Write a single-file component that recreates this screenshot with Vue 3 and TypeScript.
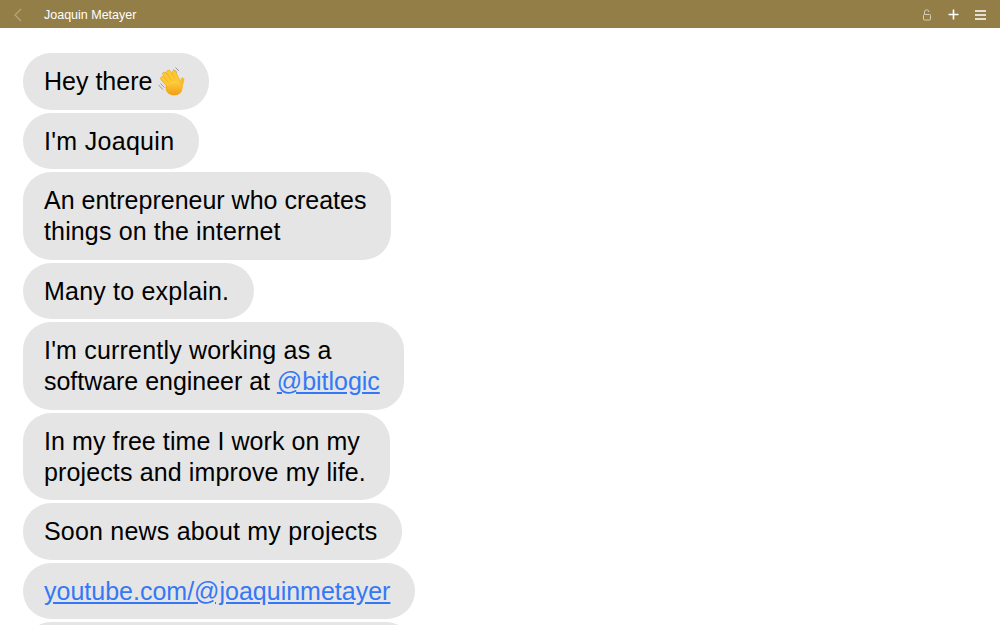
<script setup lang="ts">
interface Part { text: string; href?: boolean }
interface Line { parts: Part[]; track?: number }
interface Msg { lines: Line[]; wave?: boolean; cut?: boolean }
const messages: Msg[] = [
  { lines: [{ parts: [{ text: 'Hey there' }] }], wave: true },
  { lines: [{ parts: [{ text: "I'm Joaquin" }], track: 0.3 }] },
  { lines: [{ parts: [{ text: 'An entrepreneur who creates' }] }, { parts: [{ text: 'things on the internet' }], track: 0.14 }] },
  { lines: [{ parts: [{ text: 'Many to explain.' }], track: 0.2 }] },
  { lines: [{ parts: [{ text: "I'm currently working as a" }], track: 0.19 }, { parts: [{ text: 'software engineer at ' }, { text: '@bitlogic', href: true }], track: -0.03 }] },
  { lines: [{ parts: [{ text: 'In my free time I work on my' }], track: 0.07 }, { parts: [{ text: 'projects and improve my life.' }], track: 0.13 }] },
  { lines: [{ parts: [{ text: 'Soon news about my projects' }], track: 0.2 }] },
  { lines: [{ parts: [{ text: 'youtube.com/@joaquinmetayer', href: true }] }] },
  { lines: [{ parts: [{ text: '\u00a0' }] }], cut: true }
]
const fingers: string[] = [
  'M6.5 12.5 L15 22',
  'M8.5 8 L17 19.5',
  'M12.5 6 L20 18',
  'M18 6.5 L23 17.5'
]
</script>

<template>
  <div class="page">
    <header class="bar">
      <svg class="back" width="10" height="16" viewBox="0 0 10 16"><path d="M8 2 L2 8 L8 14" fill="none" stroke="#b5a67e" stroke-width="1.2" /></svg>
      <span class="title">Joaquin Metayer</span>
      <div class="actions">
        <svg width="10" height="12" viewBox="0 0 10 12"><path d="M2.5 5 V3 a2.2 2.2 0 0 1 4.4 0" fill="none" stroke="#d6cdb3" stroke-width="1" /><rect x="1.5" y="5.5" width="7" height="5.5" rx="0.8" fill="none" stroke="#d6cdb3" stroke-width="1" /></svg>
        <svg width="11" height="11" viewBox="0 0 11 11"><path d="M5.5 0.5 V10.5 M0.5 5.5 H10.5" stroke="#fff" stroke-width="1.6" /></svg>
        <svg width="11" height="10" viewBox="0 0 11 10"><path d="M0 1 H11 M0 5 H11 M0 9 H11" stroke="#fff" stroke-width="1.5" /></svg>
      </div>
    </header>
    <main class="chat">
      <div v-for="(m, i) in messages" :key="i" class="bubble" :class="{ cut: m.cut }">
        <div v-for="(line, j) in m.lines" :key="j" class="line" :style="{ letterSpacing: (line.track ?? 0) + 'px' }">
          <template v-for="(p, k) in line.parts" :key="k">
            <a v-if="p.href" class="link" href="#">{{ p.text }}</a>
            <span v-else>{{ p.text }}</span>
          </template>
          <svg v-if="m.wave" class="wave" width="28" height="31" viewBox="0 0 28 31">
            <defs>
              <linearGradient id="hand" x1="0" y1="0" x2="0" y2="1">
                <stop offset="0" stop-color="#fdd13f" />
                <stop offset="1" stop-color="#f29d16" />
              </linearGradient>
            </defs>
            <path d="M17.5 3.5 L21 6.5 M19.5 1.5 L23 5 M2.5 19 L7 23.5 M4.5 17.5 L8.5 21.5" stroke="#8f8f8f" stroke-width="0.9" fill="none" />
            <ellipse cx="18" cy="21.5" rx="8.5" ry="8" fill="#f6ad21" />
            <path v-for="(d, f) in fingers" :key="f" :d="d" stroke="#eb9f1c" stroke-width="4.4" stroke-linecap="round" fill="none" />
            <path v-for="(d, f) in fingers" :key="'y' + f" :d="d" stroke="#fcc934" stroke-width="3.5" stroke-linecap="round" fill="none" />
            <path d="M26.5 13.5 L24.5 21.5" stroke="#f8bc2b" stroke-width="3.8" stroke-linecap="round" fill="none" />
            <ellipse cx="18.7" cy="22" rx="7.6" ry="7" fill="url(#hand)" />
          </svg>
        </div>
      </div>
    </main>
  </div>
</template>

<style>
html, body { margin: 0; height: 100%; overflow: hidden; background: #fff; }
</style>

<style scoped>
.page {
  height: 625px;
  overflow: hidden;
  font-family: "Liberation Sans", Arial, sans-serif;
}
.bar {
  height: 28px;
  box-sizing: border-box;
  background: #937e48;
  display: flex;
  align-items: center;
  padding: 1px 14px 0 13px;
  color: #fff;
}
.back { margin-right: 21px; }
.title { font-size: 12.5px; line-height: 15px; padding-top: 1px; }
.actions {
  margin-left: auto;
  display: flex;
  align-items: center;
  gap: 16px;
}
.chat {
  padding: 25.4px 0 0 23px;
  display: flex;
  flex-direction: column;
  align-items: flex-start;
  gap: 3.125px;
}
.bubble {
  background: #e5e5e5;
  border-radius: 28px;
  padding: 12.75px 24.5px 12.25px 21px;
  font-size: 25px;
  line-height: 31.25px;
  color: #000;
  white-space: nowrap;
}
.cut { width: 345px; }
.line { display: flex; align-items: center; white-space: pre; }
.link { color: #3478f6; text-decoration: underline; }
.wave { margin-left: 4px; flex: none; overflow: visible; }
</style>
